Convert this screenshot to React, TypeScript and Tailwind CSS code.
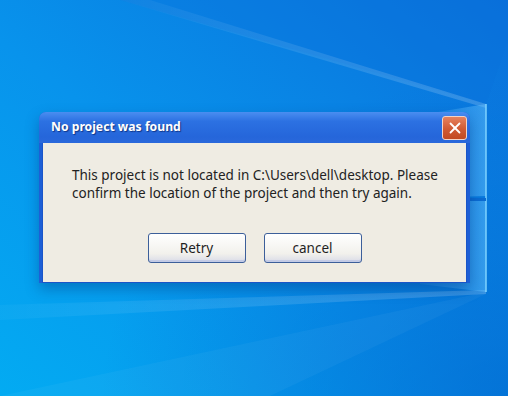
import { X } from 'lucide-react'

function Wallpaper() {
  return (
    <svg className="absolute inset-0" width="508" height="396" viewBox="0 0 508 396">
      <defs>
        <linearGradient id="bg" x1="0" y1="1" x2="1" y2="0">
          <stop offset="0" stopColor="#03abf2" />
          <stop offset="0.45" stopColor="#0893ec" />
          <stop offset="1" stopColor="#0a6fda" />
        </linearGradient>
        <linearGradient id="pane" x1="0" y1="0" x2="1" y2="0">
          <stop offset="0" stopColor="#4fb6ff" stopOpacity="0.15" />
          <stop offset="1" stopColor="#6cc6ff" stopOpacity="0.45" />
        </linearGradient>
        <linearGradient id="beam" x1="0" y1="0" x2="1" y2="0">
          <stop offset="0" stopColor="#ffffff" stopOpacity="0.03" />
          <stop offset="1" stopColor="#ffffff" stopOpacity="0.18" />
        </linearGradient>
        <radialGradient id="dark" cx="1" cy="1" r="0.8">
          <stop offset="0" stopColor="#0057c4" stopOpacity="0.5" />
          <stop offset="1" stopColor="#0057c4" stopOpacity="0" />
        </radialGradient>
      </defs>
      <rect width="508" height="396" fill="url(#bg)" />
      <rect width="508" height="396" fill="url(#dark)" />
      {/* upper beam */}
      <polygon points="120,0 508,0 508,40 486,104" fill="#0a72dc" opacity="0.3" />
      <polygon points="120,0 150,0 486,104 486,108" fill="url(#beam)" />
      {/* lower beams */}
      <polygon points="0,305 486,290 486,294 0,320" fill="url(#beam)" />
      <polygon points="0,396 270,396 486,294 486,292" fill="#ffffff" opacity="0.04" />
      {/* windows logo panes */}
      <polygon points="420,115 486,104 486,196 420,198" fill="url(#pane)" />
      <polygon points="420,201 486,201 486,292 420,284" fill="url(#pane)" />
      <line x1="486" y1="104" x2="486" y2="292" stroke="#7fd3ff" strokeWidth="1.5" />
      <line x1="420" y1="199.5" x2="486" y2="199.5" stroke="#0a6bd2" strokeWidth="3" />
    </svg>
  )
}

export default function App() {
  return (
    <div className="relative w-[508px] h-[396px] overflow-hidden" style={{ fontFamily: '"Noto Sans", "Open Sans", sans-serif' }}>
      <Wallpaper />

      <div className="relative pt-[112px] pl-[39px]">
        {/* Dialog */}
        <div className="w-[431px] rounded-t-[7px] bg-[#1d5fd6] shadow-[0_6px_14px_rgba(0,40,110,0.35)]">
          {/* Title bar */}
          <div className="h-[31px] flex items-center justify-between pl-[12px] pr-[3px] rounded-t-[7px] bg-[linear-gradient(to_bottom,#4a8ef0_0%,#2c71e2_30%,#2566da_80%,#2a69db_100%)]">
            <span className="text-white text-[12.2px] font-bold [text-shadow:1px_1px_1px_rgba(0,20,80,0.6)]">
              No project was found
            </span>
            <div className="w-[25px] h-[24px] flex items-center justify-center rounded-[3px] border border-[#f3d3c6] bg-[linear-gradient(to_bottom,#e6825e,#d05a33_55%,#c24a22)]">
              <X size={18} strokeWidth={2.4} color="#ffffff" />
            </div>
          </div>

          {/* Body */}
          <div className="mx-[3px] mb-[3px] bg-[#efece3] border border-t-0 border-[#1a55c8] pt-[23px] pb-[19px]">
            <p className="pl-[29px] text-[13.5px] leading-[18px] text-[#222222]">
              This project is not located in C:\Users\dell\desktop. Please<br />
              confirm the location of the project and then try again.
            </p>
            <div className="mt-[31px] flex justify-center gap-[18px]">
              {['Retry', 'cancel'].map(label => (
                <button
                  key={label}
                  className="w-[98px] h-[30px] pt-[1px] rounded-[3px] border border-[#3c5f9a] text-[13.5px] text-[#1f1f1f] bg-[linear-gradient(to_bottom,#ffffff,#f2f1ec_70%,#d9dbe8)] shadow-[inset_0_-2px_0_#c3cbe6]"
                >
                  {label}
                </button>
              ))}
            </div>
          </div>
        </div>
      </div>
    </div>
  )
}
